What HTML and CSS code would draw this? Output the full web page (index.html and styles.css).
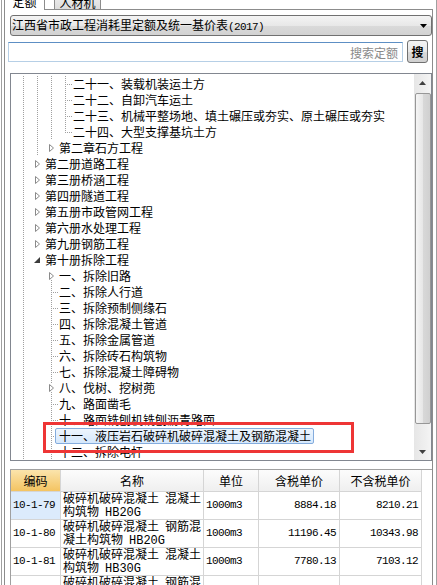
FILE: index.html
```html
<!DOCTYPE html>
<html lang="zh-CN">
<head>
<meta charset="utf-8">
<title>定额</title>
<link rel="stylesheet" href="styles.css">
</head>
<body>
<div class="frame">
  <div class="tabs">
    <div class="tab active">定额</div>
    <div class="tab">人材机</div>
  </div>
  <div class="pane">
    <div class="combo">
      <span>江西省市政工程消耗里定额及统一基价表<span class="mono">(2017)</span></span>
      <svg class="combo-arrow" width="7" height="4" viewBox="0 0 7 4"><path d="M0 0H7L3.5 4Z" fill="#000"/></svg>
    </div>
    <div class="search">
      <input class="search-box" placeholder="搜索定额">
      <button class="search-btn">搜</button>
    </div>

    <div class="tree-panel">
      <div class="tree">
        <div class="row"><i class="g"></i><i class="g"></i><i class="g"></i><i class="n tee"></i><span class="lbl">二十一、装载机装运土方</span></div>
        <div class="row"><i class="g"></i><i class="g"></i><i class="g"></i><i class="n tee"></i><span class="lbl">二十二、自卸汽车运土</span></div>
        <div class="row"><i class="g"></i><i class="g"></i><i class="g"></i><i class="n tee"></i><span class="lbl">二十三、机械平整场地、填土碾压或夯实、原土碾压或夯实</span></div>
        <div class="row"><i class="g"></i><i class="g"></i><i class="g"></i><i class="n elbow"></i><span class="lbl">二十四、大型支撑基坑土方</span></div>
        <div class="row"><i class="g"></i><i class="g"></i><i class="n"><svg width="5" height="8" viewBox="0 0 5 8"><path d="M.5.5 4.5 4 .5 7.5Z" fill="#fff" stroke="#8a8a8a"/></svg></i><span class="lbl">第二章石方工程</span></div>
        <div class="row"><i class="g"></i><i class="n"><svg width="5" height="8" viewBox="0 0 5 8"><path d="M.5.5 4.5 4 .5 7.5Z" fill="#fff" stroke="#8a8a8a"/></svg></i><span class="lbl">第二册道路工程</span></div>
        <div class="row"><i class="g"></i><i class="n"><svg width="5" height="8" viewBox="0 0 5 8"><path d="M.5.5 4.5 4 .5 7.5Z" fill="#fff" stroke="#8a8a8a"/></svg></i><span class="lbl">第三册桥涵工程</span></div>
        <div class="row"><i class="g"></i><i class="n"><svg width="5" height="8" viewBox="0 0 5 8"><path d="M.5.5 4.5 4 .5 7.5Z" fill="#fff" stroke="#8a8a8a"/></svg></i><span class="lbl">第四册隧道工程</span></div>
        <div class="row"><i class="g"></i><i class="n"><svg width="5" height="8" viewBox="0 0 5 8"><path d="M.5.5 4.5 4 .5 7.5Z" fill="#fff" stroke="#8a8a8a"/></svg></i><span class="lbl">第五册市政管网工程</span></div>
        <div class="row"><i class="g"></i><i class="n"><svg width="5" height="8" viewBox="0 0 5 8"><path d="M.5.5 4.5 4 .5 7.5Z" fill="#fff" stroke="#8a8a8a"/></svg></i><span class="lbl">第六册水处理工程</span></div>
        <div class="row"><i class="g"></i><i class="n"><svg width="5" height="8" viewBox="0 0 5 8"><path d="M.5.5 4.5 4 .5 7.5Z" fill="#fff" stroke="#8a8a8a"/></svg></i><span class="lbl">第九册钢筋工程</span></div>
        <div class="row"><i class="g"></i><i class="n"><svg width="6" height="6" viewBox="0 0 6 6"><path d="M6 0V6H0Z" fill="#3c3c3c"/></svg></i><span class="lbl">第十册拆除工程</span></div>
        <div class="row"><i class="g"></i><i class="b"></i><i class="n down"><svg width="5" height="8" viewBox="0 0 5 8"><path d="M.5.5 4.5 4 .5 7.5Z" fill="#fff" stroke="#8a8a8a"/></svg></i><span class="lbl">一、拆除旧路</span></div>
        <div class="row"><i class="g"></i><i class="b"></i><i class="n tee"></i><span class="lbl">二、拆除人行道</span></div>
        <div class="row"><i class="g"></i><i class="b"></i><i class="n tee"></i><span class="lbl">三、拆除预制侧缘石</span></div>
        <div class="row"><i class="g"></i><i class="b"></i><i class="n tee"></i><span class="lbl">四、拆除混凝土管道</span></div>
        <div class="row"><i class="g"></i><i class="b"></i><i class="n tee"></i><span class="lbl">五、拆除金属管道</span></div>
        <div class="row"><i class="g"></i><i class="b"></i><i class="n tee"></i><span class="lbl">六、拆除砖石构筑物</span></div>
        <div class="row"><i class="g"></i><i class="b"></i><i class="n tee"></i><span class="lbl">七、拆除混凝土障碍物</span></div>
        <div class="row"><i class="g"></i><i class="b"></i><i class="n line"><svg width="5" height="8" viewBox="0 0 5 8"><path d="M.5.5 4.5 4 .5 7.5Z" fill="#fff" stroke="#8a8a8a"/></svg></i><span class="lbl">八、伐树、挖树蔸</span></div>
        <div class="row"><i class="g"></i><i class="b"></i><i class="n tee"></i><span class="lbl">九、路面凿毛</span></div>
        <div class="row"><i class="g"></i><i class="b"></i><i class="n tee"></i><span class="lbl">十、路面铣刨机铣刨沥青路面</span></div>
        <div class="row"><i class="g"></i><i class="b"></i><i class="n tee"></i><span class="lbl sel">十一、液压岩石破碎机破碎混凝土及钢筋混凝土</span></div>
        <div class="row"><i class="g"></i><i class="b"></i><i class="n tee"></i><span class="lbl">十二、拆除电杆</span></div>
      </div>
      <div class="vscroll">
        <div class="sb-btn"><svg width="7" height="4" viewBox="0 0 7 4"><path d="M0 4H7L3.5 0Z" fill="#404040"/></svg></div>
        <div class="sb-thumb"></div>
        <div class="sb-space"></div>
        <div class="sb-btn"><svg width="7" height="4" viewBox="0 0 7 4"><path d="M0 0H7L3.5 4Z" fill="#404040"/></svg></div>
      </div>
      <div class="mark"></div>
    </div>

    <div class="grid">
      <div class="th on">编码</div>
      <div class="th">名称</div>
      <div class="th">单位</div>
      <div class="th">含税单价</div>
      <div class="th">不含税单价</div>

      <div class="td cur mono">10-1-79</div>
      <div class="td"><span class="name">破碎机破碎混凝土&ensp;混凝土<br>构筑物&ensp;<span class="model">HB20G</span></span></div>
      <div class="td mono">1000m3</div>
      <div class="td num mono">8884.18</div>
      <div class="td num mono">8210.21</div>

      <div class="td mono">10-1-80</div>
      <div class="td"><span class="name">破碎机破碎混凝土&ensp;钢筋混<br>凝土构筑物&ensp;<span class="model">HB20G</span></span></div>
      <div class="td mono">1000m3</div>
      <div class="td num mono">11196.45</div>
      <div class="td num mono">10343.98</div>

      <div class="td mono">10-1-81</div>
      <div class="td"><span class="name">破碎机破碎混凝土&ensp;混凝土<br>构筑物&ensp;<span class="model">HB30G</span></span></div>
      <div class="td mono">1000m3</div>
      <div class="td num mono">7780.13</div>
      <div class="td num mono">7103.12</div>

      <div class="td mono">10-1-82</div>
      <div class="td"><span class="name">破碎机破碎混凝土&ensp;钢筋混<br>凝土构筑物&ensp;<span class="model">HB30G</span></span></div>
      <div class="td mono">1000m3</div>
      <div class="td num mono"></div>
      <div class="td num mono"></div>
    </div>
  </div>
</div>
</body>
</html>
```

FILE: styles.css
```css
body {
    margin: 0;
    width: 437px;
    height: 585px;
    overflow: hidden;
    background: #fff;
    font-family: "Noto Sans CJK SC", sans-serif;
    font-size: 12px;
    color: #000;
}
.mono {
    font-family: "Liberation Mono", monospace;
    font-size: 11px;
    letter-spacing: -0.6px;
}

/* outer window */
.frame {
    margin-left: 1px;
    width: 436px;
    height: 585px;
    box-sizing: border-box;
    border-left: 1px solid #a0a0a0;
    border-right: 1px solid #a0a0a0;
}
.tabs {
    display: flex;
    align-items: flex-end;
    height: 9px;
    padding-left: 2px;
}
.tab {
    flex: none;
    height: 18px;
    box-sizing: border-box;
    padding: 5px 0 0;
    line-height: 12px;
    text-align: center;
    border: 1px solid #8c8c8c;
    border-bottom: none;
}
.tab.active {
    width: 41px;
    height: 19px;
    padding-top: 4px;
    margin-bottom: -1px;
    background: #fff;
    position: relative;
}
.tab:not(.active) {
    width: 47px;
    margin-left: 9px;
    background: linear-gradient(#f2f2f2, #dcdcdc);
}
.pane {
    margin: 0 3px 0 2px;
    height: 600px;
    border: 1px solid #8c8c8c;
    border-bottom: none;
}

/* quota book selector */
.combo {
    margin: 5px 0 0 5px;
    height: 21px;
    box-sizing: border-box;
    border: 1px solid #707070;
    border-radius: 3px;
    background: linear-gradient(#f4f4f4, #e8e8e8 50%, #dadada 51%, #d2d2d2);
    display: flex;
    align-items: center;
    justify-content: space-between;
    padding: 0 4px 0 1px;
    line-height: 18px;
}
.combo-arrow { margin-top: 1px; }

.search {
    display: flex;
    align-items: flex-start;
    margin-top: 4px;
    height: 23px;
}
.search-box {
    margin: 2px 0 0 3px;
    width: 395px;
    height: 20px;
    box-sizing: border-box;
    border: 1px solid #b6cfe6;
    border-top-color: #5d8fc4;
    padding: 0 4px;
    font-family: "Noto Sans CJK SC", sans-serif;
    font-size: 12px;
    text-align: right;
    outline: none;
}
.search-box::placeholder { color: #8a8a8a; }
.search-btn {
    margin-left: 4px;
    width: 21px;
    height: 23px;
    padding: 0;
    border: 1px solid #707070;
    border-radius: 3px;
    background: linear-gradient(#f4f4f4, #e8e8e8 50%, #dadada 51%, #d0d0d0);
    font-family: "Noto Sans CJK SC", sans-serif;
    font-size: 12px;
    font-weight: bold;
    color: #000;
}

/* tree */
.tree-panel {
    position: relative;
    margin: 10px 0 0 5px;
    height: 388px;
    box-sizing: border-box;
    border: 1px solid #828790;
    display: flex;
}
.tree {
    flex: 1;
    overflow: hidden;
    padding: 2px 0 0 5px;
}
.row {
    display: flex;
    height: 16px;
    line-height: 16px;
    white-space: nowrap;
}
.g, .b, .n {
    flex: none;
    width: 14px;
    height: 16px;
    background-repeat: no-repeat;
}
.g, .n.tee, .n.line, .n.down {
    background-image: repeating-linear-gradient(#a0a0a0 0 1px, transparent 1px 2px);
    background-size: 1px 16px;
    background-position: 7px 0;
}
.n.down { background-size: 1px 8px; background-position: 7px 8px; }
.n.tee, .n.elbow {
    background-image:
        repeating-linear-gradient(#a0a0a0 0 1px, transparent 1px 2px),
        repeating-linear-gradient(to right, #a0a0a0 0 1px, transparent 1px 2px);
    background-size: 1px 16px, 7px 1px;
    background-position: 7px 0, 7px 8px;
}
.n.elbow { background-size: 1px 8px, 7px 1px; }
.n {
    display: flex;
    align-items: center;
    justify-content: center;
}
.n svg { background: #fff; }
.lbl {
    margin-left: -3px;
    height: 16px;
    box-sizing: border-box;
    padding: 0 2px 0 3px;
    line-height: 14px;
    border: 1px solid transparent;
    border-radius: 2px;
}
.lbl.sel {
    border-color: #84acdd;
    background: linear-gradient(#eef5fd, #d5e8fc);
}

.vscroll {
    flex: none;
    width: 17px;
    display: flex;
    flex-direction: column;
    background: linear-gradient(to right, #e6e6e6, #f4f4f4);
}
.sb-btn {
    height: 17px;
    display: flex;
    align-items: center;
    justify-content: center;
}
.sb-thumb {
    margin: 2px 0 0 1px;
    height: 331px;
    box-sizing: border-box;
    border: 1px solid #979797;
    border-radius: 2px;
    background: linear-gradient(to right, #f5f5f5, #e6e6e6 50%, #d8d8d8 51%, #d0d0d0);
}
.sb-space { flex: 1; }
.mark {
    position: absolute;
    left: 32px;
    top: 348px;
    width: 311px;
    height: 31px;
    box-sizing: border-box;
    border: 3px solid #ee3535;
}

/* quota list */
.grid {
    margin: 8px 0 0 5px;
    border-top: 1px solid #a0a0a0;
    border-left: 1px solid #a0a0a0;
    display: grid;
    grid-template-columns: 50px 143px 55px 81px 82px;
}
.th, .td {
    box-sizing: border-box;
    border-right: 1px solid #d5d5d5;
    border-bottom: 1px solid #d5d5d5;
}
.th {
    height: 22px;
    line-height: 21px;
    text-align: center;
    background: linear-gradient(#fcfcfc, #efefef);
}
.th.on { background: linear-gradient(#fbe4ac, #f4c462); }
.td {
    height: 28px;
    padding: 0 2px;
    display: flex;
    align-items: center;
    line-height: 13px;
}
.name { white-space: nowrap; }
.model {
    font-family: "Liberation Mono", monospace;
    font-size: 12px;
}
.td.num { justify-content: flex-end; padding-right: 3px; }
.td.cur { background: #dcebfc; }
```
